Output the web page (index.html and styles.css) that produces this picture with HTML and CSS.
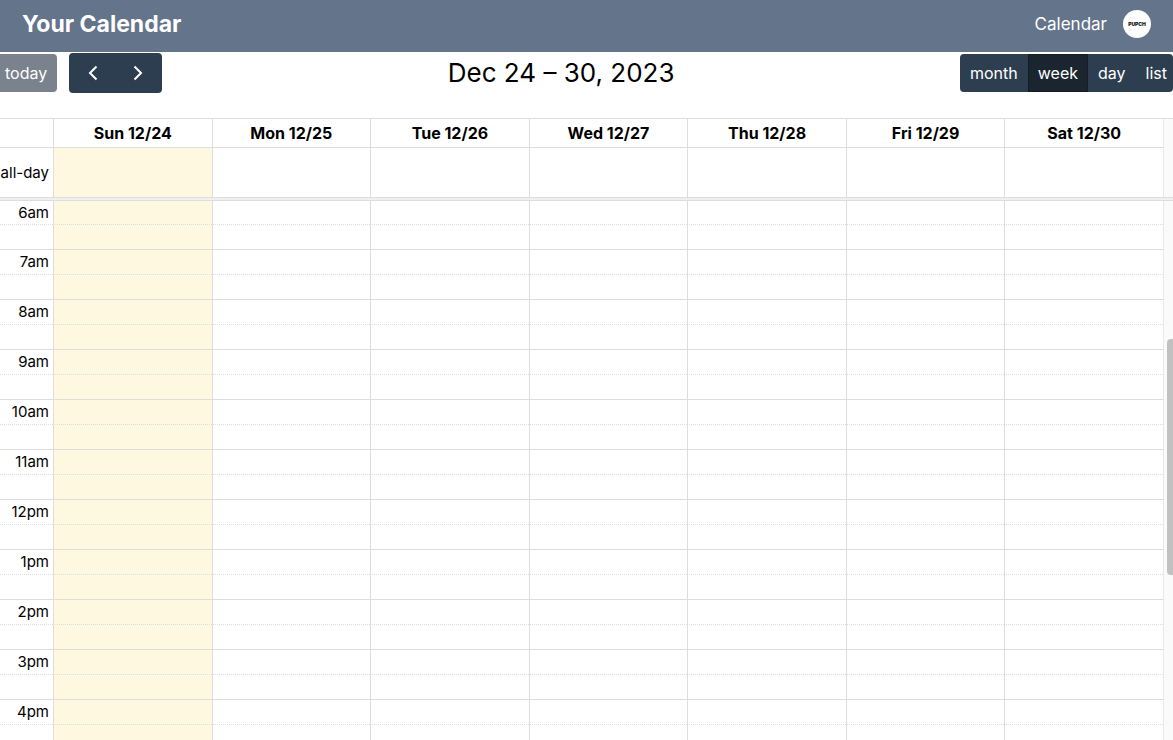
FILE: index.html
```html
<!DOCTYPE html>
<html lang="en">
<head>
<meta charset="utf-8">
<meta name="viewport" content="width=device-width, initial-scale=1">
<title>Your Calendar</title>
<link rel="stylesheet" href="styles.css">
</head>
<body>
<header class="navbar">
  <h1 class="brand">Your Calendar</h1>
  <nav class="nav-links">
    <a class="nav-link" href="#calendar">Calendar</a>
    <a class="avatar" href="#account">PUPCH</a>
  </nav>
</header>
<main class="calendar" id="calendar">
  <div class="toolbar">
    <div class="toolbar-start">
      <button class="btn btn-today" type="button" disabled>today</button>
      <div class="btn-group">
        <button class="btn btn-icon" type="button" aria-label="Previous week"><svg class="chevron" viewBox="0 0 24 24"><path d="M15.500 5.500L9 12l6.500 6.500"/></svg></button>
        <button class="btn btn-icon" type="button" aria-label="Next week"><svg class="chevron" viewBox="0 0 24 24"><path d="M8.500 5.500L15 12l-6.500 6.500"/></svg></button>
      </div>
    </div>
    <h2 class="title">Dec 24 – 30, 2023</h2>
    <div class="btn-group">
      <button class="btn" type="button">month</button>
      <button class="btn btn-active" type="button" aria-pressed="true">week</button>
      <button class="btn" type="button">day</button>
      <button class="btn btn-last" type="button">list</button>
    </div>
  </div>
  <div class="section section-head">
    <table class="grid">
      <colgroup><col class="axis-col"><col span="7"></colgroup>
      <thead>
        <tr><td class="axis"></td><th>Sun 12/24</th><th>Mon 12/25</th><th>Tue 12/26</th><th>Wed 12/27</th><th>Thu 12/28</th><th>Fri 12/29</th><th>Sat 12/30</th></tr>
      </thead>
      <tbody>
        <tr class="all-day"><th class="axis" scope="row">all-day</th><td class="today"></td><td></td><td></td><td></td><td></td><td></td><td></td></tr>
      </tbody>
    </table>
    <div class="track"></div>
  </div>
  <div class="divider"></div>
  <div class="section section-body">
    <table class="grid slots">
      <colgroup><col class="axis-col"><col span="7"></colgroup>
      <tbody>
        <tr class="first"><th class="axis" scope="row">6am</th><td class="today"></td><td></td><td></td><td></td><td></td><td></td><td></td></tr>
        <tr class="half"><td class="axis"></td><td class="today"></td><td></td><td></td><td></td><td></td><td></td><td></td></tr>
        <tr><th class="axis" scope="row">7am</th><td class="today"></td><td></td><td></td><td></td><td></td><td></td><td></td></tr>
        <tr class="half"><td class="axis"></td><td class="today"></td><td></td><td></td><td></td><td></td><td></td><td></td></tr>
        <tr><th class="axis" scope="row">8am</th><td class="today"></td><td></td><td></td><td></td><td></td><td></td><td></td></tr>
        <tr class="half"><td class="axis"></td><td class="today"></td><td></td><td></td><td></td><td></td><td></td><td></td></tr>
        <tr><th class="axis" scope="row">9am</th><td class="today"></td><td></td><td></td><td></td><td></td><td></td><td></td></tr>
        <tr class="half"><td class="axis"></td><td class="today"></td><td></td><td></td><td></td><td></td><td></td><td></td></tr>
        <tr><th class="axis" scope="row">10am</th><td class="today"></td><td></td><td></td><td></td><td></td><td></td><td></td></tr>
        <tr class="half"><td class="axis"></td><td class="today"></td><td></td><td></td><td></td><td></td><td></td><td></td></tr>
        <tr><th class="axis" scope="row">11am</th><td class="today"></td><td></td><td></td><td></td><td></td><td></td><td></td></tr>
        <tr class="half"><td class="axis"></td><td class="today"></td><td></td><td></td><td></td><td></td><td></td><td></td></tr>
        <tr><th class="axis" scope="row">12pm</th><td class="today"></td><td></td><td></td><td></td><td></td><td></td><td></td></tr>
        <tr class="half"><td class="axis"></td><td class="today"></td><td></td><td></td><td></td><td></td><td></td><td></td></tr>
        <tr><th class="axis" scope="row">1pm</th><td class="today"></td><td></td><td></td><td></td><td></td><td></td><td></td></tr>
        <tr class="half"><td class="axis"></td><td class="today"></td><td></td><td></td><td></td><td></td><td></td><td></td></tr>
        <tr><th class="axis" scope="row">2pm</th><td class="today"></td><td></td><td></td><td></td><td></td><td></td><td></td></tr>
        <tr class="half"><td class="axis"></td><td class="today"></td><td></td><td></td><td></td><td></td><td></td><td></td></tr>
        <tr><th class="axis" scope="row">3pm</th><td class="today"></td><td></td><td></td><td></td><td></td><td></td><td></td></tr>
        <tr class="half"><td class="axis"></td><td class="today"></td><td></td><td></td><td></td><td></td><td></td><td></td></tr>
        <tr><th class="axis" scope="row">4pm</th><td class="today"></td><td></td><td></td><td></td><td></td><td></td><td></td></tr>
        <tr class="half"><td class="axis"></td><td class="today"></td><td></td><td></td><td></td><td></td><td></td><td></td></tr>
      </tbody>
    </table>
    <div class="track"><div class="thumb"></div></div>
  </div>
</main>
</body>
</html>
```
FILE: styles.css
```css
* { box-sizing: border-box; }

body {
  margin: 0;
  height: 100vh;
  display: flex;
  flex-direction: column;
  overflow: hidden;
  background: #fff;
  color: #000;
  font: 16px/24px Inter, "Liberation Sans", sans-serif;
}

.navbar {
  display: flex;
  align-items: center;
  justify-content: space-between;
  padding: 8px 22px 12px;
  background: #64748b;
  color: #fff;
}

.brand {
  margin: 0;
  font-size: 23px;
  line-height: 32px;
  font-weight: 700;
}

.nav-links {
  display: flex;
  align-items: center;
  gap: 16px;
}

.nav-link {
  color: #fff;
  font-size: 17px;
  text-decoration: none;
}

.avatar {
  display: flex;
  align-items: center;
  justify-content: center;
  width: 28px;
  height: 28px;
  border-radius: 50%;
  background: #fff;
  color: #111;
  font-size: 5px;
  line-height: 8px;
  font-weight: 900;
  text-decoration: none;
}

.calendar {
  flex: 1;
  min-height: 0;
  display: flex;
  flex-direction: column;
}

.toolbar {
  display: flex;
  align-items: center;
  justify-content: space-between;
  padding: 1px 0 25px;
}

.toolbar-start {
  display: flex;
  align-items: center;
  gap: 12px;
}

.title {
  margin: 0;
  font-size: 26px;
  line-height: 36px;
  font-weight: 400;
}

.btn-group {
  display: flex;
  border-radius: 4px;
  overflow: hidden;
}

.btn {
  height: 38px;
  padding: 0 10px;
  border: 0;
  background: #2c3e50;
  color: #fff;
  font: inherit;
}

.btn-today {
  padding-left: 5px;
  border-radius: 0 4px 4px 0;
  background: #79828d;
}

.btn-active {
  background: #1a252f;
  box-shadow: inset 0 0 0 1px #151e27;
}

.btn-last { padding-right: 6px; }

.btn-icon {
  display: flex;
  align-items: center;
  height: 40px;
  padding: 0 12px 0 10px;
}

.btn-icon:first-child { padding: 0 11px 0 12px; }

.chevron {
  width: 24px;
  height: 24px;
  fill: none;
  stroke: #fff;
  stroke-width: 2;
}

.section { display: flex; }

.section-head { border-top: 1px solid #ddd; }

.section-body {
  flex: 1;
  min-height: 0;
  overflow: hidden;
}

.grid {
  flex: 1;
  align-self: flex-start;
  width: 100%;
  table-layout: fixed;
  border-collapse: separate;
  border-spacing: 0;
}

.axis-col { width: 53px; }

.grid th,
.grid td {
  height: 28px;
  padding: 0;
  border-left: 1px solid #ddd;
}

.grid .axis {
  padding-right: 4px;
  border-left: 0;
  font-size: 15px;
  font-weight: 400;
  text-align: right;
  white-space: nowrap;
}

.all-day th,
.all-day td {
  height: 50px;
  border-top: 1px solid #ddd;
}

.grid .today { background: #fff8e0; }

.slots th,
.slots td {
  height: 25px;
  border-top: 1px solid #ddd;
}

.slots .first th,
.slots .first td {
  height: 23px;
  line-height: 23px;
  border-top: 0;
}

.slots .half td { border-top-style: dotted; }

.divider {
  height: 4px;
  border: solid #ddd;
  border-width: 1px 0;
  background: #f0f0f0;
}

.track {
  position: relative;
  flex: none;
  width: 10px;
  border-left: 1px solid #e8e8e8;
  background: #fafafa;
}

.thumb {
  position: absolute;
  top: 25.6%;
  right: 0;
  width: 6px;
  height: 43.8%;
  border-radius: 4px 0 0 4px;
  background: #c1c1c1;
}
```
